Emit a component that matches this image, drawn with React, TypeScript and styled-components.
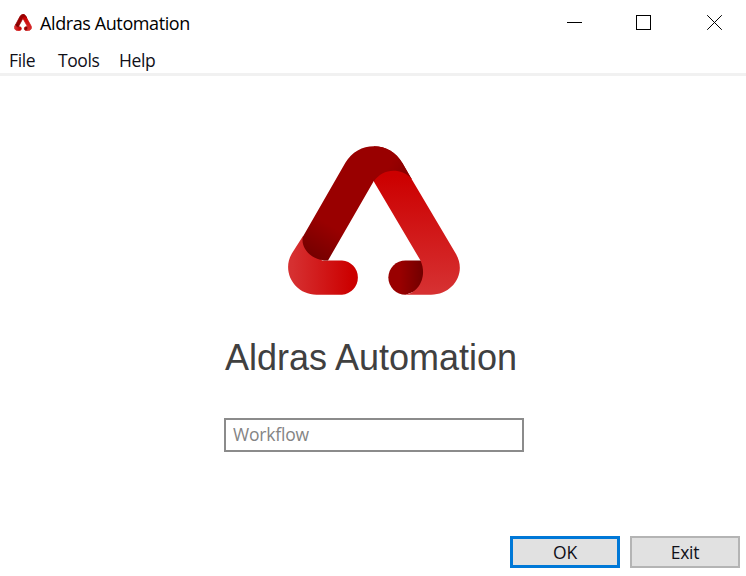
import React from 'react';
import styled, { createGlobalStyle } from 'styled-components';

const GlobalStyle = createGlobalStyle`
  * { box-sizing: border-box; }
  body { margin: 0; background: #fff; overflow: hidden; }
`;

const Window = styled.div`
  width: 746px;
  height: 576px;
  display: flex;
  flex-direction: column;
  background: #fff;
  color: #000;
  font-family: 'Open Sans', 'Noto Sans', sans-serif;
`;

const TitleBar = styled.header`
  height: 46px;
  display: flex;
  align-items: center;
  padding: 0 0 2px 14px;
`;

const WindowTitle = styled.span`
  margin: 2px 0 0 8px;
  flex: 1;
  font-size: 18px;
  line-height: 24px;
  letter-spacing: -0.4px;
  white-space: nowrap;
`;

const Controls = styled.div`
  display: flex;
  height: 44px;
`;

const ControlButton = styled.button<{ $width: number }>`
  width: ${(p) => p.$width}px;
  height: 44px;
  padding: 0;
  border: 0;
  background: transparent;
  display: flex;
  justify-content: center;
  align-items: center;
`;

const MenuBar = styled.nav`
  height: 30px;
  display: flex;
  gap: 21px;
  padding: 2px 9px 0;
  border-bottom: 3px solid #f1f1f1;
`;

const MenuItem = styled.span<{ $width: number }>`
  width: ${(p) => p.$width}px;
  font-size: 17.5px;
  line-height: 25px;
  letter-spacing: -0.4px;
  color: #101018;
  white-space: nowrap;
`;

const Content = styled.main`
  flex: 1;
  display: flex;
  flex-direction: column;
  align-items: center;
  padding-top: 69px;
`;

const LogoFrame = styled.div`
  display: flex;
  padding-left: 2px;
`;

const Heading = styled.h1`
  margin: 39px 0 0;
  padding-right: 4px;
  font: 400 36px/46px 'Liberation Sans', Arial, sans-serif;
  color: #404040;
  white-space: nowrap;
`;

const WorkflowInput = styled.input`
  width: 300px;
  height: 34px;
  margin: 37px 0 0 2px;
  padding: 0 7px 3px;
  border: 2px solid #8b8b8b;
  border-radius: 0;
  background: #fff;
  font: 400 17.5px 'Open Sans', 'Noto Sans', sans-serif;
  letter-spacing: -0.2px;
  &::placeholder { color: #848484; opacity: 1; }
`;

const Footer = styled.footer`
  display: flex;
  justify-content: flex-end;
  gap: 10px;
  padding: 0 6px 8px 0;
`;

const DialogButton = styled.button<{ $primary?: boolean }>`
  width: 110px;
  height: 32px;
  padding: 0;
  border: ${(p) => (p.$primary ? '3px solid #0078d7' : '2px solid #b4b4b4')};
  background: #e1e1e1;
  color: #101018;
  font: 400 17.5px/24px 'Open Sans', 'Noto Sans', sans-serif;
  letter-spacing: -0.2px;
`;

type LogoProps = { id: string; width: number; height: number; bold?: boolean };

function Logo({ id, width, height, bold }: LogoProps) {
  const paint = (name: string) => {
    const ref = `url(#${id}-${name})`;
    return bold ? { fill: ref, stroke: ref, strokeWidth: 8 } : { fill: ref };
  };
  return (
    <svg
      width={width}
      height={height}
      viewBox={bold ? '284 141 181 159' : '288 145 173 151'}
      preserveAspectRatio="none"
      aria-hidden="true"
    >
      <defs>
        <linearGradient id={`${id}-foot`} gradientUnits="userSpaceOnUse" x1="292" y1="0" x2="352" y2="0">
          <stop offset="0" stopColor="#d63031" />
          <stop offset="1" stopColor="#cc0000" />
        </linearGradient>
        <linearGradient id={`${id}-right`} gradientUnits="userSpaceOnUse" x1="0" y1="176" x2="0" y2="290">
          <stop offset="0" stopColor="#cc0000" />
          <stop offset="1" stopColor="#d63031" />
        </linearGradient>
        <linearGradient id={`${id}-dark`} gradientUnits="userSpaceOnUse" x1="330" y1="225" x2="311" y2="257">
          <stop offset="0" stopColor="#990000" />
          <stop offset="1" stopColor="#740000" />
        </linearGradient>
        <linearGradient id={`${id}-cap`} gradientUnits="userSpaceOnUse" x1="400" y1="0" x2="424" y2="0">
          <stop offset="0" stopColor="#990000" />
          <stop offset="1" stopColor="#700000" />
        </linearGradient>
        <linearGradient id={`${id}-fold`} gradientUnits="userSpaceOnUse" x1="390" y1="164" x2="410" y2="176">
          <stop offset="0" stopColor="#990000" />
          <stop offset="1" stopColor="#850000" />
        </linearGradient>
      </defs>
      <path d="M303 236 L292 253.2 C281 271.5 294.5 294.7 316.5 294.7 H342 A17.2 17.2 0 0 0 342 260.4 H322 Z" {...paint('foot')} />
      <path d="M345.2 163 C358 140.5 389.5 140.5 402.4 163 L411.6 179 L373.8 181 L328 260.5 C311 261 300 247 303 236.6 Z" {...paint('dark')} />
      <path d="M374 146.2 C386 146.2 396 152 402.4 163 L411.6 179 L374 182 Z" {...paint('fold')} />
      <path d="M405.5 260.4 H424 V288 L405.5 294.7 A17.15 17.15 0 0 1 405.5 260.4 Z" {...paint('cap')} />
      <path d="M373.8 181.5 C382 168.5 400 167 411 178 L456 254 C467 273 453 294.7 431 294.7 H404 C418 294.5 428 277 420.5 260.5 Z" {...paint('right')} />
    </svg>
  );
}

export default function App() {
  return (
    <>
      <GlobalStyle />
      <Window>
        <TitleBar>
          <Logo id="small" width={18} height={17} bold />
          <WindowTitle>Aldras Automation</WindowTitle>
          <Controls>
            <ControlButton $width={59} aria-label="Minimize">
              <svg width="15" height="15"><path d="M0 7.5H15" stroke="#000" /></svg>
            </ControlButton>
            <ControlButton $width={79} aria-label="Maximize">
              <svg width="15" height="15"><rect x=".5" y=".5" width="14" height="14" fill="none" stroke="#000" /></svg>
            </ControlButton>
            <ControlButton $width={63} aria-label="Close">
              <svg width="15" height="15"><path d="M.2.2l14.6 14.6M14.8.2.2 14.8" stroke="#000" /></svg>
            </ControlButton>
          </Controls>
        </TitleBar>
        <MenuBar>
          <MenuItem $width={28}>File</MenuItem>
          <MenuItem $width={40}>Tools</MenuItem>
          <MenuItem $width={38}>Help</MenuItem>
        </MenuBar>
        <Content>
          <LogoFrame>
            <Logo id="main" width={173} height={151} />
          </LogoFrame>
          <Heading>Aldras Automation</Heading>
          <WorkflowInput placeholder="Workflow" />
        </Content>
        <Footer>
          <DialogButton $primary>OK</DialogButton>
          <DialogButton>Exit</DialogButton>
        </Footer>
      </Window>
    </>
  );
}
